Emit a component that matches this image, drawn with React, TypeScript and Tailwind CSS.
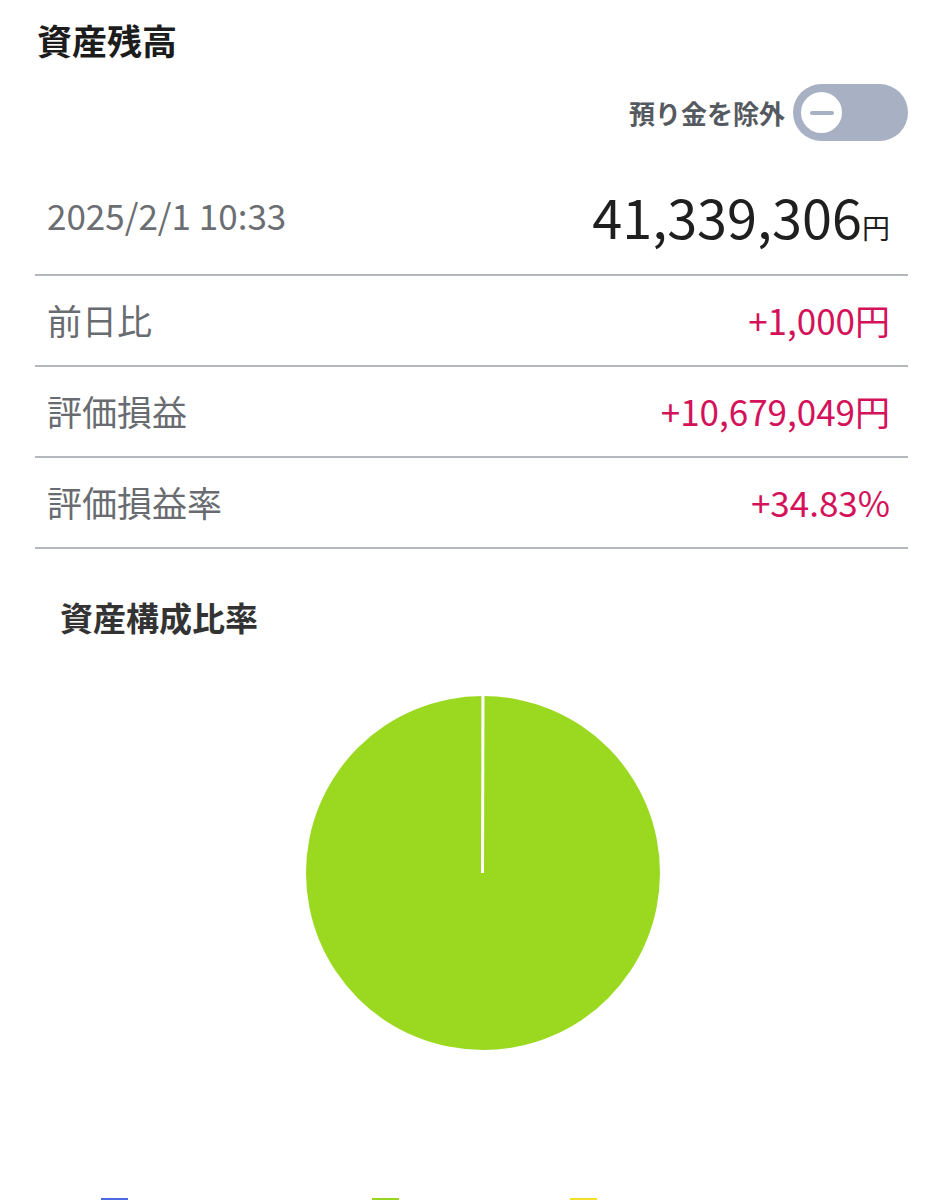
const ROWS = [
  { label: '前日比', value: '+1,000円' },
  { label: '評価損益', value: '+10,679,049円' },
  { label: '評価損益率', value: '+34.83%' },
];

const LEGEND = [
  { color: 'bg-[#4a6be0]', label: '国内株式(現物)', width: 'w-[271px]', gap: 'gap-[51px]' },
  { color: 'bg-[#9ad61f]', label: '投資信託', width: 'w-[198px]', gap: 'gap-[18px]' },
  { color: 'bg-[#f2e02a]', label: '預り金', width: 'w-[200px]', gap: 'gap-[76px]' },
];

function Toggle() {
  return (
    <div className="w-[115px] h-[57px] rounded-full bg-[#a8b0c4] p-[5px] flex items-center">
      <div className="w-[47px] h-[47px] rounded-full bg-white border-[3px] border-[#a8b0c4] flex items-center justify-center">
        <div className="w-[24px] h-[4px] rounded-full bg-[#a8b0c4]" />
      </div>
    </div>
  );
}

function PieChart() {
  const cx = 183;
  const cy = 183;
  const r = 177;
  return (
    <svg width="366" height="366" viewBox="0 0 366 366">
      <circle cx={cx} cy={cy} r={r} fill="#9ad91f" />
      <path d={`M${cx} ${cy} L${cx - 1.5} ${cy - r} L${cx + 1} ${cy - r} Z`} fill="#c9d4f2" />
      <line x1={cx - 0.5} y1={cy} x2={cx} y2={cy - r} stroke="#ffffff" strokeWidth="3" />
    </svg>
  );
}

export default function App() {
  return (
    <div className="w-[943px] bg-white font-['Noto_Sans_CJK_JP','Noto_Sans',sans-serif]">
      <div className="px-[35px] pt-[15px]">
        <h1 className="text-[35px] leading-[50px] font-bold text-[#1c1c1c] pl-[2px]">資産残高</h1>

        <div className="flex items-center justify-end gap-[8px] mt-[19px]">
          <span className="text-[26px] font-bold text-[#555a60]">預り金を除外</span>
          <Toggle />
        </div>

        <div className="flex items-center justify-between h-[135px] pt-[16px] border-b-2 border-[#b4b8bc] px-[12px] pr-[18px]">
          <span className="text-[35px] text-[#6b6e72]">2025/2/1 10:33</span>
          <span className="text-[#1f1f1f] flex items-baseline">
            <span className="text-[54px] leading-none">41,339,306</span>
            <span className="text-[28px] leading-none">円</span>
          </span>
        </div>

        {ROWS.map(row => (
          <div
            key={row.label}
            className="flex items-center justify-between h-[91px] border-b-2 border-[#b4b8bc] px-[12px] pr-[18px]"
          >
            <span className="text-[35px] text-[#686b6f]">{row.label}</span>
            <span className="text-[35px] text-[#d4125a]">{row.value}</span>
          </div>
        ))}
      </div>

      <h2 className="text-[33px] leading-[48px] font-bold text-[#333333] pl-[60px] mt-[44px]">資産構成比率</h2>

      <div className="flex justify-center mt-[49px] pl-[23px]">
        <PieChart />
      </div>

      <div className="flex items-start pl-[101px] mt-[142px]">
        {LEGEND.map(item => (
          <div key={item.label} className={`flex items-start ${item.width} ${item.gap}`}>
            <div className={`w-[27px] h-[20px] shrink-0 ${item.color}`} />
            <span className="text-[24px] leading-none text-[#444444] pt-[4px]">{item.label}</span>
          </div>
        ))}
      </div>
      <div className="h-[60px]" />
    </div>
  );
}
